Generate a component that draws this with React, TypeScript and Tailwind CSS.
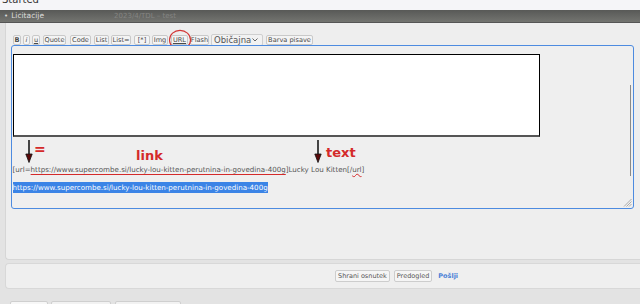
import React from "react";

const Btn = ({ children, w, ml, cls = "" }: { children: React.ReactNode; w: string; ml: string; cls?: string }) => (
  <div
    className={`${w} ${ml} h-[10px] shrink-0 flex items-center justify-center border border-[#c9c9c9] rounded-[2px] bg-[#f4f4f4] text-[6.6px] leading-none text-[#4a4a4a] ${cls}`}
  >
    {children}
  </div>
);

const Arrow = ({ className }: { className: string }) => (
  <svg className={className} width="8" height="23" viewBox="0 0 8 23">
    <line x1="4" y1="0" x2="4" y2="16" stroke="#1a1a1a" strokeWidth="1.6" />
    <polygon points="0.8,14 7.2,14 4,22.5" fill="#5a0808" stroke="#111" strokeWidth="0.8" />
  </svg>
);

export default function App() {
  return (
    <div
      className="w-[640px] h-[304px] overflow-hidden flex flex-col bg-[#e3e3e3]"
      style={{ fontFamily: '"DejaVu Sans", Verdana, sans-serif' }}
    >
      {/* top strip */}
      <div className="h-[10px] shrink-0 bg-[#f5f5f8] overflow-hidden relative">
        <div className="absolute left-[2px] top-[-6px] text-[10px] leading-[12px] text-[#333]">Started</div>
      </div>
      {/* header bar */}
      <div className="h-[13px] shrink-0 flex items-center bg-[linear-gradient(to_bottom,#585957,#737470)] pl-[4px] border-b border-[#555]">
        <span className="text-[7px] leading-none text-[#d8d8d8] mr-[3px]">•</span>
        <span className="text-[7.5px] leading-none text-[#dedede]">Licitacije</span>
        <span className="ml-[70px] text-[7px] leading-none text-[#858583]">2023/4/TDL – test</span>
      </div>
      {/* main panel */}
      <div className="ml-[5px] h-[237px] shrink-0 bg-[#eeeeee] border-l border-b border-[#d6d6d6] rounded-bl-[4px] flex flex-col">
        {/* toolbar */}
        <div className="relative flex items-center mt-[11px] h-[12px] pl-[7px]">
          <Btn w="w-[8px]" ml="ml-0" cls="font-bold">B</Btn>
          <Btn w="w-[7px]" ml="ml-[2px]" cls="italic">i</Btn>
          <Btn w="w-[8px]" ml="ml-[2px]" cls="underline">u</Btn>
          <Btn w="w-[23px]" ml="ml-[3px]">Quote</Btn>
          <Btn w="w-[21px]" ml="ml-[4px]">Code</Btn>
          <Btn w="w-[15px]" ml="ml-[3px]">List</Btn>
          <Btn w="w-[20px]" ml="ml-[2px]">List=</Btn>
          <Btn w="w-[16px]" ml="ml-[3px]">[*]</Btn>
          <Btn w="w-[16px]" ml="ml-[2px]">Img</Btn>
          <Btn w="w-[17px]" ml="ml-[3px]" cls="underline">URL</Btn>
          <Btn w="w-[19px]" ml="ml-[2px]">Flash</Btn>
          <div className="ml-[2px] w-[52px] h-[12px] shrink-0 flex items-center justify-between border border-[#cfcfcf] rounded-[2px] bg-[#f2f2f2] pl-[2px] pr-[4px]">
            <span className="text-[8.5px] leading-none text-[#555]">Običajna</span>
            <svg width="6" height="4" viewBox="0 0 6 4">
              <polyline points="0.5,0.5 3,3 5.5,0.5" fill="none" stroke="#666" strokeWidth="1" />
            </svg>
          </div>
          <Btn w="w-[47px]" ml="ml-[3px]">Barva pisave</Btn>
          {/* red circle around URL */}
          <svg className="absolute left-[162px] top-[-5px]" width="24" height="22" viewBox="0 0 24 22">
            <ellipse cx="12" cy="11" rx="10.5" ry="9.6" fill="none" stroke="#d23636" strokeWidth="1.1" />
          </svg>
        </div>
        {/* textarea */}
        <div className="relative ml-[5px] mt-[-1px] w-[623px] h-[164px] border-[1.5px] border-[#4d8be0] rounded-[3px] bg-[#efefef] pt-[7.5px] pl-[0.5px]">
          <div className="w-[527px] h-[83px] bg-white border border-black border-b-[2px] border-b-[#555]" />
          <div className="mt-[28px] h-[9px] text-[7.1px] leading-[9px] text-[#555] whitespace-nowrap">
            [url=
            <span className="underline decoration-[#d42a2a] decoration-[1px] underline-offset-[2px]">
              https://www.supercombe.si/lucky-lou-kitten-perutnina-in-govedina-400g
            </span>
            ]Lucky Lou Kitten[/
            <span className="underline decoration-wavy decoration-[#d42a2a] decoration-[0.8px]">url</span>]
          </div>
          <div className="mt-[8px] flex">
            <span className="h-[11px] bg-[#3b84e6] text-white text-[7.1px] leading-[11px] whitespace-nowrap">
              https://www.supercombe.si/lucky-lou-kitten-perutnina-in-govedina-400g
            </span>
          </div>
          {/* annotations */}
          <Arrow className="absolute left-[13px] top-[94px]" />
          <span className="absolute left-[22px] top-[96px] text-[14px] leading-none font-bold text-[#d42a2a]">=</span>
          <span className="absolute left-[124px] top-[103px] text-[13px] leading-none font-bold text-[#d42a2a]">link</span>
          <Arrow className="absolute left-[302px] top-[94px]" />
          <span className="absolute left-[314px] top-[100px] text-[13px] leading-none font-bold text-[#d42a2a]">text</span>
          {/* scrollbar line */}
          <div className="absolute right-[2px] top-[39px] w-px h-[91px] bg-[#8a8a8a]" />
          {/* resize grip */}
          <svg className="absolute right-[1px] bottom-[1px]" width="9" height="9" viewBox="0 0 9 9">
            <line x1="8.5" y1="1" x2="1" y2="8.5" stroke="#999" strokeWidth="0.8" />
            <line x1="8.5" y1="3.5" x2="3.5" y2="8.5" stroke="#999" strokeWidth="0.8" />
            <line x1="8.5" y1="6" x2="6" y2="8.5" stroke="#999" strokeWidth="0.8" />
          </svg>
        </div>
      </div>
      {/* buttons panel */}
      <div className="ml-[5px] mt-[3px] h-[26px] shrink-0 bg-[#efefef] border-l border-t border-b border-[#d8d8d8] rounded-l-[4px] flex items-center">
        <div className="ml-[329px] h-[12px] px-[2px] flex items-center border border-[#cdcdcd] rounded-[2px] bg-[#f5f5f5] text-[6.5px] leading-none text-[#555]">
          Shrani osnutek
        </div>
        <div className="ml-[4px] h-[12px] px-[2px] flex items-center border border-[#cdcdcd] rounded-[2px] bg-[#f5f5f5] text-[6.5px] leading-none text-[#555]">
          Predogled
        </div>
        <div className="ml-[4px] h-[12px] px-[2px] flex items-center text-[6.5px] leading-none font-bold text-[#4a7fd6]">
          Pošlji
        </div>
      </div>
      {/* bottom tabs */}
      <div className="mt-[12px] flex">
        <div className="ml-[10px] w-[38px] h-[8px] bg-[#f7f7f7] border border-[#cfcfcf] rounded-t-[2px]" />
        <div className="ml-[3px] w-[60px] h-[8px] bg-[#f2f2f2] border border-[#cfcfcf] rounded-t-[2px]" />
        <div className="ml-[4px] w-[66px] h-[8px] bg-[#f2f2f2] border border-[#cfcfcf] rounded-t-[2px]" />
      </div>
    </div>
  );
}
